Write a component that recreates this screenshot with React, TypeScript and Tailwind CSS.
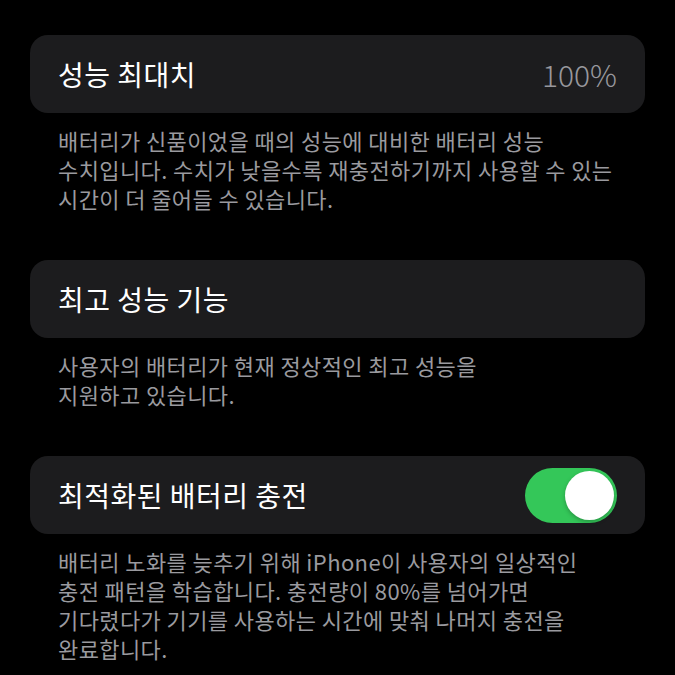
import React from "react";

const font = { fontFamily: '"Noto Sans CJK KR", "Noto Sans", sans-serif' };

function Card({ children }: { children: React.ReactNode }) {
  return (
    <div className="flex h-[78px] items-center justify-between rounded-[18px] bg-[#1c1c1e] pl-[28px] pr-[28px]">
      {children}
    </div>
  );
}

function Desc({ children }: { children: React.ReactNode }) {
  return (
    <div className="mt-[13px] px-[28px] text-[22px] leading-[29px] text-[#9a9a9f] tracking-[0.4px]">
      {children}
    </div>
  );
}

export default function App() {
  return (
    <div
      className="min-h-[675px] w-[675px] bg-black px-[30px] pt-[35px] antialiased"
      style={font}
    >
      <Card>
        <span className="text-[28px] text-white tracking-[0.5px]">성능 최대치</span>
        <span className="text-[30px] font-light text-[#98989d]">100%</span>
      </Card>
      <Desc>
        배터리가 신품이었을 때의 성능에 대비한 배터리 성능
        <br />
        수치입니다. 수치가 낮을수록 재충전하기까지 사용할 수 있는
        <br />
        시간이 더 줄어들 수 있습니다.
      </Desc>

      <div className="mt-[47px]">
        <Card>
          <span className="text-[28px] text-white tracking-[0.5px]">최고 성능 기능</span>
        </Card>
      </div>
      <Desc>
        사용자의 배터리가 현재 정상적인 최고 성능을
        <br />
        지원하고 있습니다.
      </Desc>

      <div className="mt-[47px]">
        <div className="flex h-[78px] items-center justify-between rounded-[18px] bg-[#1c1c1e] pl-[28px] pr-[28px]">
          <span className="text-[28px] text-white tracking-[0.5px]">최적화된 배터리 충전</span>
          <div className="flex h-[55px] w-[92px] items-center justify-end rounded-full bg-[#34c759] pr-[3px]">
            <div className="h-[49px] w-[49px] rounded-full bg-white shadow-[0_2px_4px_rgba(0,0,0,0.25)]" />
          </div>
        </div>
      </div>
      <Desc>
        배터리 노화를 늦추기 위해 iPhone이 사용자의 일상적인
        <br />
        충전 패턴을 학습합니다. 충전량이 80%를 넘어가면
        <br />
        기다렸다가 기기를 사용하는 시간에 맞춰 나머지 충전을
        <br />
        완료합니다.
      </Desc>
    </div>
  );
}
